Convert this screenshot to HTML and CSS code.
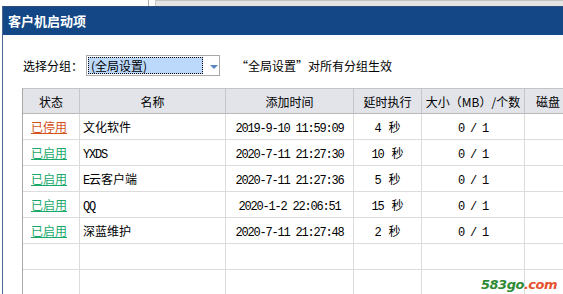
FILE: index.html
```html
<!DOCTYPE html>
<html lang="zh-CN">
<head>
    <meta charset="UTF-8">
    <title>客户机启动项</title>
    <link rel="stylesheet" href="styles.css">
</head>
<body>

    <div class="desk">
        <div class="desk-left"></div>
        <div class="desk-right"></div>
    </div>

    <div class="win">
        <div class="win-title">客户机启动项</div>

        <div class="win-body">
            <div class="toolbar">
                <span class="label">选择分组：</span>
                <div class="select">
                    <span class="select-value">(全局设置)</span>
                    <span class="select-arrow"></span>
                </div>
                <span class="note">“全局设置”对所有分组生效</span>
            </div>

            <table class="grid">
                <thead>
                    <tr>
                        <th class="c-state">状态</th>
                        <th class="c-name">名称</th>
                        <th class="c-time">添加时间</th>
                        <th class="c-delay">延时执行</th>
                        <th class="c-size">大小（MB）/个数</th>
                        <th class="c-disk">磁盘</th>
                    </tr>
                </thead>
                <tbody>
                    <tr>
                        <td><a class="off" href="#">已停用</a></td>
                        <td class="name">文化软件</td>
                        <td class="mid"><span class="mono">2019-9-10 11:59:09</span></td>
                        <td class="mid"><span class="mono num">4</span>秒</td>
                        <td class="mid"><span class="mono">0 / 1</span></td>
                        <td></td>
                    </tr>
                    <tr>
                        <td><a class="on" href="#">已启用</a></td>
                        <td class="name"><span class="mono">YXDS</span></td>
                        <td class="mid"><span class="mono">2020-7-11 21:27:30</span></td>
                        <td class="mid"><span class="mono num">10</span>秒</td>
                        <td class="mid"><span class="mono">0 / 1</span></td>
                        <td></td>
                    </tr>
                    <tr>
                        <td><a class="on" href="#">已启用</a></td>
                        <td class="name"><span class="mono">E</span>云客户端</td>
                        <td class="mid"><span class="mono">2020-7-11 21:27:36</span></td>
                        <td class="mid"><span class="mono num">5</span>秒</td>
                        <td class="mid"><span class="mono">0 / 1</span></td>
                        <td></td>
                    </tr>
                    <tr>
                        <td><a class="on" href="#">已启用</a></td>
                        <td class="name"><span class="mono">QQ</span></td>
                        <td class="mid"><span class="mono">2020-1-2 22:06:51</span></td>
                        <td class="mid"><span class="mono num">15</span>秒</td>
                        <td class="mid"><span class="mono">0 / 1</span></td>
                        <td></td>
                    </tr>
                    <tr>
                        <td><a class="on" href="#">已启用</a></td>
                        <td class="name">深蓝维护</td>
                        <td class="mid"><span class="mono">2020-7-11 21:27:48</span></td>
                        <td class="mid"><span class="mono num">2</span>秒</td>
                        <td class="mid"><span class="mono">0 / 1</span></td>
                        <td></td>
                    </tr>
                    <tr>
                        <td></td><td></td><td></td><td></td><td></td><td></td>
                    </tr>
                    <tr>
                        <td></td><td></td><td></td><td></td><td></td><td></td>
                    </tr>
                </tbody>
            </table>
        </div>

        <div class="watermark"><span class="wm-num">583go</span><span class="wm-dom">.com</span></div>
    </div>

</body>
</html>
```

FILE: styles.css
```css
html {
    box-sizing: border-box;
}
*, *:before, *:after {
    box-sizing: inherit;
}
body {
    margin: 0;
    width: 563px;
    height: 294px;
    overflow: hidden;
    position: relative;
    background: #fff;
    font-family: "Noto Sans CJK SC", sans-serif;
    font-size: 12px;
    color: #000;
}
/* strip of the window behind */
.desk {
    display: flex;
    height: 6px;
}
.desk-left {
    width: 149px;
    border-right: 1px solid #a8a8a8;
}
.desk-right {
    flex: 1;
    margin-left: 6px;
    background: #e4e4e4;
    border-top: 1px solid #c4c4c4;
    border-left: 1px solid #c8c8c8;
}
.win {
    margin-left: 2px;
    height: 288px;
    overflow: hidden;
    border-left: 1px solid #4d6a94;
    border-top: 1px solid #2e4d78;
}
.win-title {
    height: 28px;
    background: #134786;
    color: #fff;
    font-weight: bold;
    font-size: 13px;
    line-height: 27px;
    padding-left: 5px;
}
.win-body {
    padding: 20px 0 0 19px;
    overflow: hidden;
}
.toolbar {
    display: flex;
    align-items: center;
    height: 21px;
    padding-left: 1px;
}
.label {
    width: 63px;
}
.select {
    width: 134px;
    height: 21px;
    border: 1px solid #a9a9a9;
    display: flex;
    align-items: center;
    padding: 0 1px;
}
.select-value {
    width: 115px;
    height: 17px;
    line-height: 15px;
    background: #bcd9fb;
    border: 1px dotted #000;
    padding-left: 2px;
}
.select-arrow {
    margin-left: 7px;
    margin-top: 2px;
    border-left: 4px solid transparent;
    border-right: 4px solid transparent;
    border-top: 4px solid #5a86c0;
}
.note {
    margin-left: 16px;
}
/* list */
.grid {
    margin-top: 12px;
    border-collapse: separate;
    border-spacing: 0;
    table-layout: fixed;
    width: 610px;
    border-left: 1px solid #a8a8a8;
    border-top: 1px solid #c4c4c4;
}
.grid th, .grid td {
    padding: 0;
    border-right: 1px solid #dcdcdc;
    border-bottom: 1px solid #dcdcdc;
    white-space: nowrap;
    overflow: hidden;
}
.grid th {
    height: 25px;
    background: #e2e4ea;
    font-weight: normal;
    border-right-color: #c4c6cc;
    border-bottom-color: #b8b8b8;
}
.grid td {
    height: 26px;
}
.c-state { width: 57px; }
.c-name { width: 146px; }
.c-time { width: 128px; }
.c-delay { width: 68px; }
.c-size { width: 103px; }
.c-disk { width: 108px; text-align: left; padding-left: 11px !important; }
.grid td a {
    margin-left: 8px;
    text-decoration: underline;
}
.off {
    color: #d4521c;
}
.on {
    color: #17a86a;
}
.name {
    padding-left: 3px !important;
}
.mid {
    text-align: center;
}
.mono {
    font-family: "Liberation Mono", monospace;
    font-size: 12px;
    letter-spacing: -1.2px;
}
.num {
    margin-right: 8px;
}
.watermark {
    position: absolute;
    right: 6px;
    bottom: 2px;
    font-family: "DejaVu Sans", sans-serif;
    font-weight: bold;
    font-style: italic;
    font-size: 13px;
    letter-spacing: -0.5px;
}
.wm-num {
    color: #2e8a34;
}
.wm-dom {
    color: #e5532d;
}
```
